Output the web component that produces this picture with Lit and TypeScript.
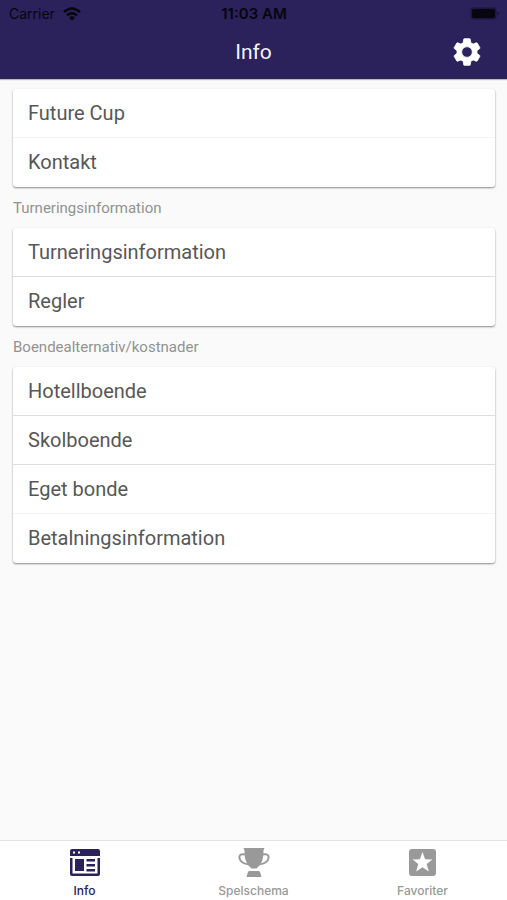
import { LitElement, html, css, svg } from "lit";
import { customElement, state } from "lit/decorators.js";
import { classMap } from "lit/directives/class-map.js";

interface Group {
  title?: string;
  items: { label: string; faint?: boolean }[];
}

const groups: Group[] = [
  { items: [{ label: "Future Cup", faint: true }, { label: "Kontakt" }] },
  {
    title: "Turneringsinformation",
    items: [{ label: "Turneringsinformation" }, { label: "Regler" }],
  },
  {
    title: "Boendealternativ/kostnader",
    items: [
      { label: "Hotellboende" },
      { label: "Skolboende" },
      { label: "Eget bonde", faint: true },
      { label: "Betalningsinformation" },
    ],
  },
];

const newsIcon = svg`
  <path fill-rule="evenodd" d="M3 2H29Q31 2 31 4V9H1V4Q1 2 3 2ZM4 4.500V6.500H6V4.500ZM9 4.500V6.500H11V4.500Z"/>
  <path fill-rule="evenodd" d="M1 11H3.500V26.500H28.500V11H31V27Q31 29 29 29H3Q1 29 1 27Z"/>
  <path d="M6 12H15V24H6ZM17.500 12H26V14.500H17.500ZM17.500 17H26V19.500H17.500ZM17.500 22H26V24.500H17.500Z"/>`;

const trophyIcon = svg`
  <path d="M5.500 1H26.500L25.500 3.500C25.500 13 23.500 17 18.500 21.500H13.500C8.500 17 6.500 13 6.500 3.500Z"/>
  <path fill="none" stroke="currentColor" stroke-width="2" d="M7 7.500C3 6.500 1 8 1.500 11C2 15 7 17 11.500 17.500M25 7.500C29 6.500 31 8 30.500 11C30 15 25 17 20.500 17.500"/>
  <path d="M11.500 24H20.500Q21.500 24 22 25L23.500 30H8.500L10 25Q10.500 24 11.500 24Z"/>`;

const starIcon = svg`
  <path fill-rule="evenodd" d="M4 2H26Q29 2 29 5V26Q29 29 26 29H5Q2 29 2 26V5Q2 2 5 2ZM15.500 5L12.900 12.300L5.500 12.500L11.300 17L9.200 24.500L15.500 20.200L21.800 24.500L19.700 17L25.500 12.500L18.100 12.300Z"/>`;

const tabs = [
  { label: "Info", icon: newsIcon },
  { label: "Spelschema", icon: trophyIcon },
  { label: "Favoriter", icon: starIcon },
];

@customElement("app-root")
export class AppRoot extends LitElement {
  @state() private active = "Info";

  static styles = css`
    :host {
      display: flex;
      flex-direction: column;
      min-height: 100vh;
      background: #fafafa;
      font-family: Roboto, "Liberation Sans", sans-serif;
      color: #575757;
    }
    header {
      background: #2b215b;
      height: 79px;
      box-shadow: 0 1px 1px rgba(43, 33, 91, 0.3);
    }
    .status,
    .bar {
      display: grid;
      grid-template-columns: 1fr auto 1fr;
      align-items: center;
    }
    .status {
      height: 27px;
      padding: 0 8px 0 9px;
      font-family: Inter, sans-serif;
      font-size: 14px;
      color: #07050f;
    }
    .carrier {
      display: flex;
      align-items: center;
      gap: 8px;
    }
    .time {
      font-size: 15px;
      font-weight: 600;
    }
    .battery {
      justify-self: end;
    }
    .bar {
      height: 50px;
      padding: 0 24px;
    }
    h1 {
      grid-column: 2;
      margin: 0;
      font-size: 21px;
      font-weight: 400;
      color: #f4f3f8;
    }
    button {
      border: 0;
      background: none;
      padding: 0;
      font: inherit;
      color: inherit;
      cursor: pointer;
    }
    .gear {
      justify-self: end;
      color: #fff;
      height: 32px;
    }
    svg {
      display: block;
      fill: currentColor;
    }
    main {
      flex: 1;
      padding: 10px 12px 24px 13px;
    }
    h2 {
      margin: 0;
      height: 41px;
      line-height: 42px;
      font-size: 15px;
      font-weight: 400;
      color: #929292;
    }
    ul {
      list-style: none;
      margin: 0;
      padding: 0;
      background: #fff;
      border-radius: 3px;
      box-shadow: 0 1px 2px rgba(0, 0, 0, 0.45);
    }
    .row {
      box-sizing: border-box;
      display: block;
      width: 100%;
      height: 49px;
      padding: 0 15px;
      text-align: left;
      font-size: 20px;
      border-bottom: 1px solid #dedede;
    }
    .faint {
      border-color: #f3f3f3;
    }
    li:last-child .row {
      border-color: transparent;
    }
    nav {
      display: grid;
      grid-template-columns: repeat(3, 1fr);
      height: 60px;
      background: #fff;
      box-sizing: border-box;
      border-top: 1px solid #e2e2e2;
    }
    .tab {
      display: flex;
      flex-direction: column;
      align-items: center;
      gap: 4px;
      padding-top: 6px;
      font-family: Inter, sans-serif;
      font-size: 12px;
      font-weight: 500;
      line-height: 16px;
      color: #999;
    }
    .on {
      color: #2b215b;
    }
  `;

  render() {
    return html`
      <header>
        <div class="status">
          <span class="carrier">
            Carrier
            <svg width="18" height="14" viewBox="0 0 18 14" aria-hidden="true">
              <g fill="none" stroke="currentColor" stroke-width="2.400">
                <path d="M1 5Q9 -2 17 5" />
                <path d="M4 8.300Q9 4 14 8.300" />
              </g>
              <path d="M6 10.500Q9 8 12 10.500L9 13.500Z" />
            </svg>
          </span>
          <span class="time">11:03 AM</span>
          <svg class="battery" width="29" height="14" viewBox="0 0 29 14" aria-hidden="true">
            <rect x="0.500" y="0.500" width="26" height="12" rx="3" fill="#1d163f" />
            <rect x="2" y="2" width="23" height="9" rx="2" />
            <path fill="#1d163f" d="M27.500 4.500Q29 5 29 6.500T27.500 8.500Z" />
          </svg>
        </div>
        <div class="bar">
          <h1>Info</h1>
          <button class="gear" aria-label="Inställningar">
            <svg width="32" height="32" viewBox="0 0 24 24">
              <path
                stroke="currentColor"
                stroke-width="0.600"
                stroke-linejoin="round"
                d="M19.430 12.980c.04-.32.07-.64.07-.98s-.03-.66-.07-.98l2.110-1.650c.19-.15.24-.42.12-.64l-2-3.460c-.12-.22-.39-.3-.61-.22l-2.490 1c-.52-.4-1.080-.73-1.690-.98l-.38-2.650C14.460 2.180 14.250 2 14 2h-4c-.25 0-.46.18-.49.42l-.38 2.650c-.61.25-1.170.59-1.690.98l-2.490-1c-.23-.09-.49 0-.61.22l-2 3.460c-.13.22-.07.49.12.64l2.110 1.650c-.04.32-.07.65-.07.98s.03.66.07.98l-2.110 1.650c-.19.15-.24.42-.12.64l2 3.460c.12.22.39.3.61.22l2.490-1c.52.4 1.080.73 1.690.98l.38 2.650c.03.24.24.42.49.42h4c.25 0 .46-.18.49-.42l.38-2.650c.61-.25 1.170-.59 1.690-.98l2.490 1c.23.09.49 0 .61-.22l2-3.460c.12-.22.07-.49-.12-.64l-2.110-1.650zM12 16c-2.200 0-4-1.800-4-4s1.800-4 4-4 4 1.800 4 4-1.800 4-4 4z"
              />
            </svg>
          </button>
        </div>
      </header>
      <main>
        ${groups.map(
          (g) => html`
            ${g.title ? html`<h2>${g.title}</h2>` : null}
            <ul>
              ${g.items.map(
                (i) => html`<li>
                  <button class=${classMap({ row: true, faint: !!i.faint })}>${i.label}</button>
                </li>`
              )}
            </ul>
          `
        )}
      </main>
      <nav>
        ${tabs.map(
          (t) => html`<button
            class=${classMap({ tab: true, on: t.label === this.active })}
            @click=${() => (this.active = t.label)}
          >
            <svg width="32" height="32" viewBox="0 0 32 32" aria-hidden="true">${t.icon}</svg>
            ${t.label}
          </button>`
        )}
      </nav>
    `;
  }
}
